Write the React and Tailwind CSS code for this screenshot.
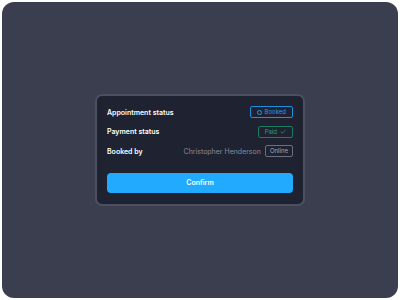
import React from 'react';
import { Check } from 'lucide-react';

const Row = ({ label, children }) => (
  <div className="flex h-[12px] items-center justify-between">
    <span className="text-[7px] font-semibold leading-none text-white">{label}</span>
    <div className="flex items-center gap-[4px]">{children}</div>
  </div>
);

export default function App() {
  return (
    <div className="h-[300px] w-[400px] bg-white p-[2px]" style={{ fontFamily: 'Inter, "Liberation Sans", sans-serif' }}>
      <div className="flex h-full w-full items-center justify-center rounded-[12px] bg-[#3b3e4f]">
        <div className="w-[210px] rounded-[7px] border-2 border-[#4c4f60] bg-[#1f2230] px-[10px] pb-[11px] pt-[10px]">
          <div className="flex flex-col gap-[7.5px]">
            <Row label="Appointment status">
              <span className="flex h-[12px] items-center gap-[3px] rounded-[2px] border border-[#1f8fdc] px-[6px] text-[6px] leading-none text-[#2a9ae6]">
                <span className="h-[5px] w-[5px] rounded-full border-[1.5px] border-[#2a9ae6]" />
                Booked
              </span>
            </Row>
            <Row label="Payment status">
              <span className="flex h-[12px] items-center gap-[3px] rounded-[2px] border border-[#1c7a5e] px-[6px] text-[6px] leading-none text-[#23a07a]">
                Paid
                <Check size={6} strokeWidth={3} />
              </span>
            </Row>
            <Row label="Booked by">
              <span className="text-[7px] leading-none text-[#8a8d99]">Christopher Henderson</span>
              <span className="flex h-[12px] items-center rounded-[2px] border border-[#6c6f7c] px-[4px] text-[6px] leading-none text-[#a4a7b2]">
                Online
              </span>
            </Row>
          </div>
          <button className="mt-[16px] flex h-[20px] w-full items-center justify-center rounded-[4px] bg-[#22aaff] text-[7px] font-semibold text-white">
            Confirm
          </button>
        </div>
      </div>
    </div>
  );
}
